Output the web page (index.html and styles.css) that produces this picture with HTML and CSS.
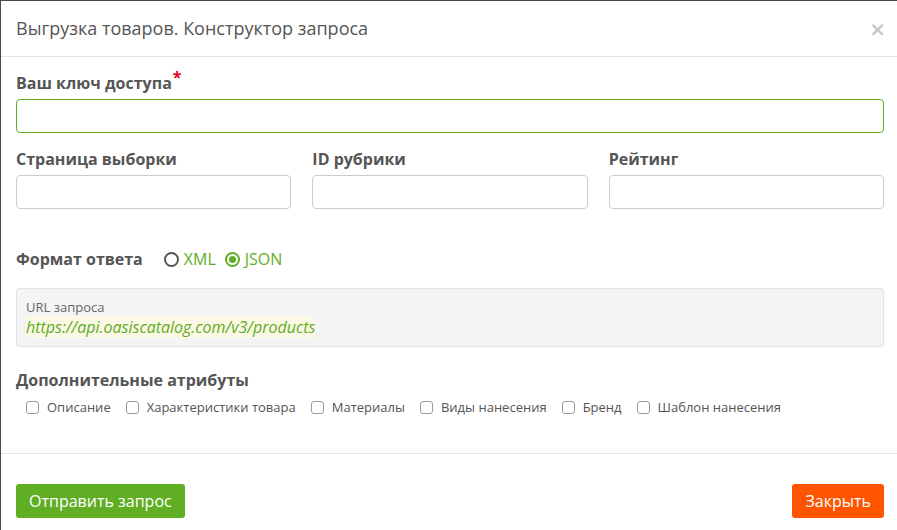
FILE: index.html
```html
<!DOCTYPE html>
<html lang="ru">
<head>
<meta charset="utf-8">
<title>Выгрузка товаров</title>
<link rel="stylesheet" href="styles.css">
</head>
<body>
<div class="modal">
  <div class="modal-header">
    <h4 class="modal-title">Выгрузка товаров. Конструктор запроса</h4>
    <span class="close">×</span>
  </div>
  <div class="modal-body">
    <div class="group">
      <label class="label">Ваш ключ доступа<span class="req">*</span></label>
      <div class="input input-active"></div>
    </div>
    <div class="row">
      <div class="group">
        <label class="label">Страница выборки</label>
        <div class="input"></div>
      </div>
      <div class="group">
        <label class="label">ID рубрики</label>
        <div class="input"></div>
      </div>
      <div class="group">
        <label class="label">Рейтинг</label>
        <div class="input"></div>
      </div>
    </div>
    <div class="format">
      <span class="label">Формат ответа</span>
      <span class="radio"></span><span class="radio-text">XML</span>
      <span class="radio checked"></span><span class="radio-text">JSON</span>
    </div>
    <div class="url-box">
      <div class="url-label">URL запроса</div>
      <div class="url"><span class="url-text">https://api.oasiscatalog.com/v3/products</span></div>
    </div>
    <div class="label attrs-title">Дополнительные атрибуты</div>
    <div class="checks">
      <span class="check"><span class="box"></span>Описание</span>
      <span class="check"><span class="box"></span>Характеристики товара</span>
      <span class="check"><span class="box"></span>Материалы</span>
      <span class="check"><span class="box"></span>Виды нанесения</span>
      <span class="check"><span class="box"></span>Бренд</span>
      <span class="check"><span class="box"></span>Шаблон нанесения</span>
    </div>
  </div>
  <div class="modal-footer">
    <button class="btn btn-green">Отправить запрос</button>
    <button class="btn btn-orange">Закрыть</button>
  </div>
</div>
</body>
</html>
```
FILE: styles.css
```css
html, body {
  margin: 0;
  padding: 0;
  height: 100%;
  overflow: hidden;
  background: #4a4a4a;
}
body {
  font-family: "Open Sans", "Noto Sans", sans-serif;
  color: #555;
}
.modal {
  margin: 1px 0 0 1px;
  width: 898px;
  min-height: 600px;
  background: #fff;
}
.modal-header {
  display: flex;
  align-items: center;
  justify-content: space-between;
  height: 55px;
  padding: 0 15px;
  border-bottom: 1px solid #e5e5e5;
}
.modal-title {
  margin: 0;
  font-size: 18px;
  font-weight: 400;
  line-height: 25px;
  color: #555;
}
.close {
  font-size: 20px;
  font-weight: 700;
  color: #c8c8c8;
  line-height: 20px;
  margin-right: -2px;
  font-family: "DejaVu Sans", sans-serif;
}
.modal-body {
  padding: 15px 15px 0 15px;
  width: 868px;
}
.label {
  display: block;
  font-size: 16px;
  font-weight: 700;
  line-height: 22px;
  color: #555;
}
.req {
  color: #e3001b;
  position: relative;
  top: -6px;
  margin-left: 1px;
}
.group .label {
  margin-bottom: 5px;
}
.input {
  height: 32px;
  border: 1px solid #ccc;
  border-radius: 4px;
  background: #fff;
}
.input-active {
  border-color: #5fad24;
}
.row {
  display: grid;
  grid-template-columns: repeat(3, 1fr);
  gap: 21px;
  margin-top: 15px;
}
.format {
  display: flex;
  align-items: center;
  margin-top: 39px;
  height: 22px;
}
.format .label {
  margin-right: 21px;
}
.radio {
  width: 11px;
  height: 11px;
  border: 2px solid #555;
  border-radius: 50%;
  margin-right: 5px;
  position: relative;
}
.radio.checked {
  border-color: #5fad24;
  margin-left: 9px;
}
.radio.checked::after {
  content: "";
  position: absolute;
  left: 2px;
  top: 2px;
  width: 7px;
  height: 7px;
  border-radius: 50%;
  background: #5fad24;
}
.radio-text {
  color: #5fad24;
  font-size: 16px;
}
.url-box {
  margin-top: 18px;
  background: #f4f4f4;
  border: 1px solid #e3e3e3;
  border-radius: 3px;
  padding: 9px 9px 8px 9px;
}
.url-label {
  font-size: 13px;
  line-height: 18px;
  color: #666;
}
.url {
  line-height: 22px;
}
.url-text {
  font-size: 16px;
  font-style: italic;
  color: #5fad24;
  background: #fbf9e6;
}
.attrs-title {
  margin-top: 22px;
}
.checks {
  display: flex;
  align-items: center;
  gap: 15px;
  margin-top: 7px;
  padding-left: 10px;
  line-height: 18px;
  font-size: 13px;
  color: #555;
}
.check {
  display: flex;
  align-items: center;
}
.box {
  width: 11px;
  height: 11px;
  border: 1px solid #9a9a9a;
  border-radius: 3px;
  margin-right: 8px;
  background: #fff;
}
.modal-footer {
  display: flex;
  justify-content: space-between;
  margin-top: 37px;
  border-top: 1px solid #e5e5e5;
  padding: 30px 15px 15px 15px;
}
.btn {
  font-family: "Open Sans", "Noto Sans", sans-serif;
  font-size: 16px;
  color: #fff;
  border: 0;
  border-radius: 3px;
  height: 34px;
  padding: 0 13px;
  line-height: 34px;
}
.btn-green {
  background: #5fae24;
}
.btn-orange {
  background: #ff5500;
}
```
